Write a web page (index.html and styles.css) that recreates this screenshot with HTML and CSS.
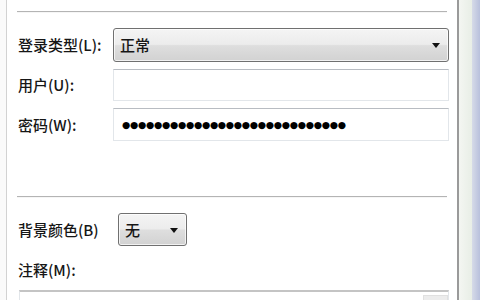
FILE: index.html
```html
<!DOCTYPE html>
<html lang="zh-CN">
<head>
<meta charset="utf-8">
<title>登录</title>
<link rel="stylesheet" href="styles.css">
</head>
<body>
<div class="window">
  <div class="edge-left"></div>
  <div class="content">
    <div class="sep sep-top"></div>
    <div class="form">
      <span class="lbl">登录类型(L):</span>
      <div class="combo combo-wide"><span class="combo-text">正常</span><span class="arrow"></span></div>
      <span class="lbl">用户(U):</span>
      <div class="field field-user"></div>
      <span class="lbl">密码(W):</span>
      <div class="field field-pwd"><span class="dots">●●●●●●●●●●●●●●●●●●●●●●●●●●●●</span></div>
    </div>
    <div class="sep sep-mid"></div>
    <div class="bg-row">
      <span class="lbl lbl-bg">背景颜色(B)</span>
      <div class="combo combo-small"><span class="combo-text">无</span><span class="arrow"></span></div>
    </div>
    <div class="lbl note-lbl">注释(M):</div>
    <div class="textarea"><div class="sb-btn"></div></div>
  </div>
  <div class="edge-right"><div class="frame-light"></div><div class="frame-blue"></div></div>
</div>
</body>
</html>
```

FILE: styles.css
```css
html, body {
  margin: 0;
  padding: 0;
  background: #ffffff;
}
body {
  font-family: "Noto Sans CJK SC", "Noto Sans", sans-serif;
  color: #161616;
}
.window {
  display: flex;
  width: 480px;
  height: 300px;
  overflow: hidden;
}
.edge-left {
  width: 6px;
  flex: none;
  background: #fafafa;
  border-right: 1px solid #d2d2d2;
}
.content {
  flex: 1;
  padding: 11px 8px 0 11px;
  background: #ffffff;
}
.sep {
  height: 0;
  border-top: 1px solid #b4b4b4;
  border-bottom: 1px solid #f6f6f6;
  margin-left: -1px;
  margin-right: 2px;
}
.form {
  margin-top: 15px;
  display: grid;
  grid-template-columns: 95px 1fr;
  grid-template-rows: 34px 32px 33px;
  row-gap: 7px;
  align-items: center;
}
.lbl {
  font-size: 15px;
  line-height: 20px;
  font-weight: 500;
  white-space: nowrap;
}
.combo {
  position: relative;
  box-sizing: border-box;
  border: 1px solid #707070;
  border-radius: 3px;
  background: linear-gradient(#f4f4f4 0%, #ececec 48%, #dedede 52%, #d2d2d2 100%);
  box-shadow: inset 0 0 0 1px rgba(255,255,255,0.7);
  display: flex;
  align-items: center;
  padding-left: 6px;
}
.combo-wide {
  height: 34px;
}
.combo-text {
  font-size: 15px;
  line-height: 20px;
  font-weight: 500;
}
.arrow {
  position: absolute;
  width: 0;
  height: 0;
  border-left: 4px solid transparent;
  border-right: 4px solid transparent;
  border-top: 5px solid #111;
  top: 50%;
  margin-top: -2px;
}
.combo-wide .arrow {
  right: 8px;
}
.field {
  box-sizing: border-box;
  border: 1px solid #e2e6ea;
  border-top-color: #b8bcc2;
  background: #ffffff;
  display: flex;
  align-items: center;
  padding-left: 8px;
}
.field-user {
  height: 32px;
}
.field-pwd {
  height: 33px;
}
.dots {
  font-family: "DejaVu Sans", sans-serif;
  font-size: 9.5px;
  letter-spacing: -0.3px;
  color: #000;
  line-height: 12px;
}
.sep-mid {
  margin-top: 55px;
}
.bg-row {
  margin-top: 15px;
  display: flex;
  align-items: center;
  height: 33px;
}
.lbl-bg {
  width: 100px;
}
.combo-small {
  width: 69px;
  height: 33px;
}
.combo-small .arrow {
  right: 8px;
}
.note-lbl {
  margin-top: 14px;
}
.textarea {
  position: relative;
  margin-top: 10px;
  margin-left: 1px;
  height: 30px;
  box-sizing: border-box;
  border: 1px solid #e2e6ea;
  border-top: 2px solid #c4c4c4;
}
.sb-btn {
  position: absolute;
  right: 0;
  top: 3px;
  width: 23px;
  height: 20px;
  background: #ececec;
  border: 1px solid #e0e0e0;
}
.edge-right {
  flex: none;
  display: flex;
  width: 21px;
  border-left: 2px solid #9a9a9a;
}
.frame-light {
  width: 13px;
  background: linear-gradient(90deg, #f4f6f2, #e8eee6);
}
.frame-blue {
  flex: 1;
  background: linear-gradient(90deg, #d6dbe8, #b8c0dc);
}
```
